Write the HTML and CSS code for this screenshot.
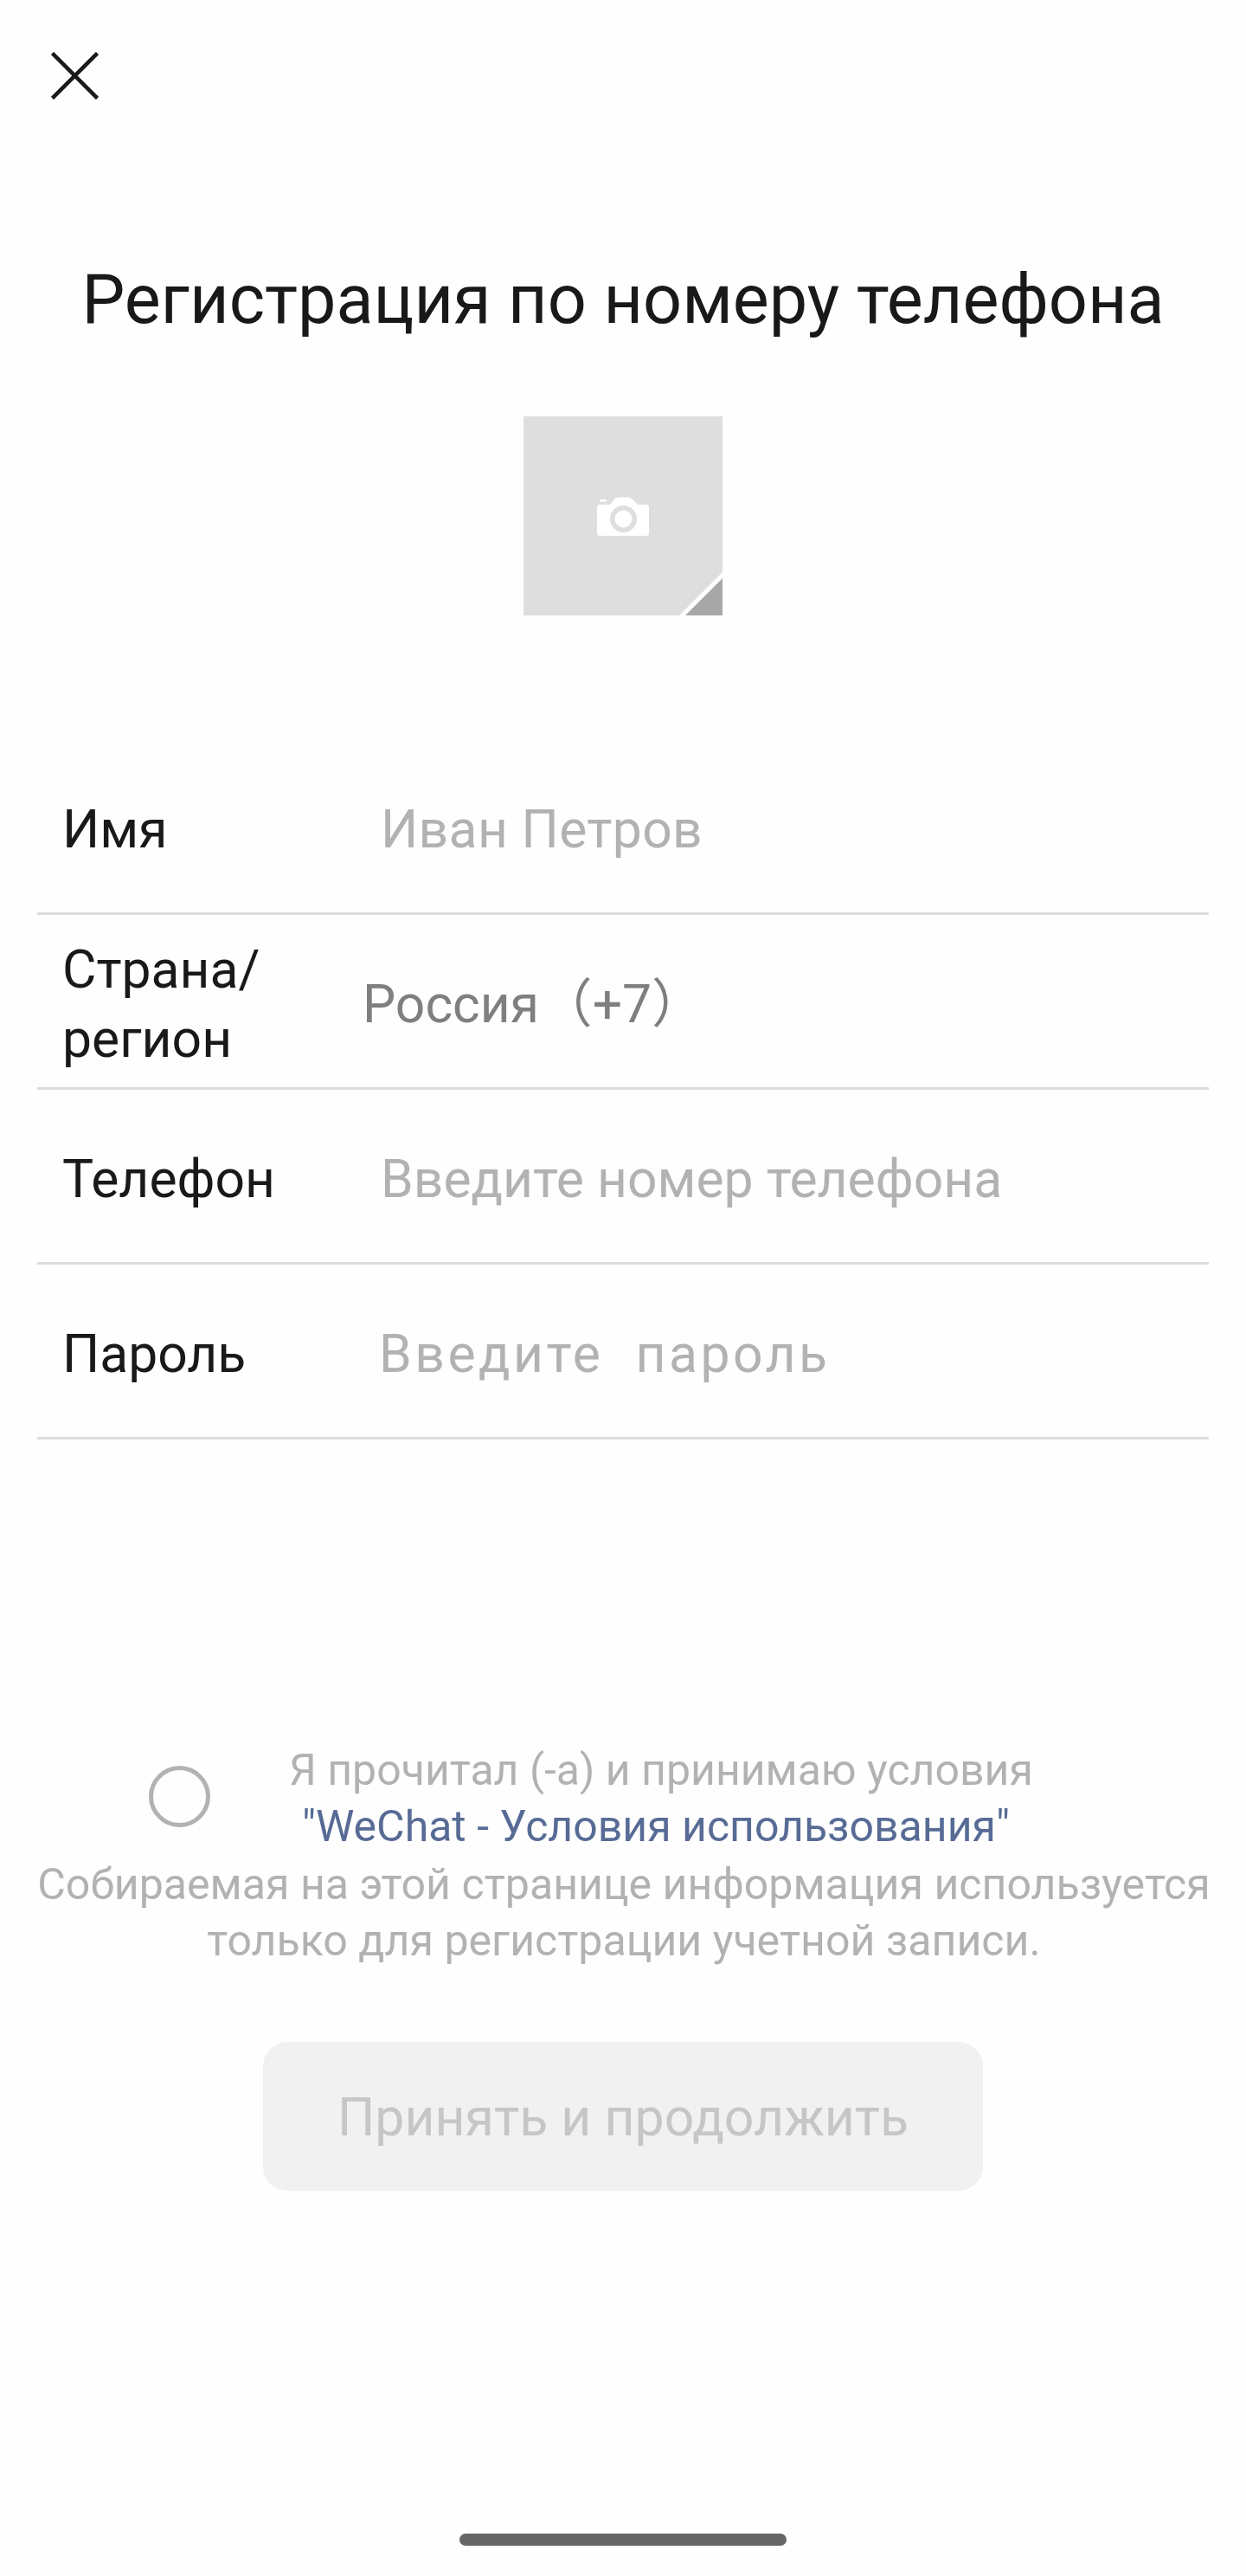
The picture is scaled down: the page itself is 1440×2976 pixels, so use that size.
FILE: index.html
```html
<!DOCTYPE html>
<html lang="ru">
<head>
<meta charset="utf-8">
<title>Регистрация по номеру телефона</title>
<link rel="stylesheet" href="styles.css">
</head>
<body>
<main class="screen">
  <header class="topbar">
    <svg class="close" viewBox="0 0 55 55" aria-hidden="true"><path d="M1.5 1.5 53.5 53.5M53.5 1.5 1.5 53.5"/></svg>
  </header>
  <h1 class="title">Регистрация по номеру телефона</h1>
  <div class="avatar">
    <svg class="camera" viewBox="0 0 60 45" aria-hidden="true">
      <path class="camera-body" fill-rule="evenodd" d="M3 9H15L20 3Q22 .5 25 .5H36Q39 .5 41 3L47 9H57Q60 9 60 12V42Q60 45 57 45H3Q0 45 0 42V12Q0 9 3 9ZM30.5 10A15.5 15.5 0 1 0 30.5 41A15.5 15.5 0 1 0 30.5 10ZM30.5 15.5A10 10 0 1 1 30.5 35.5A10 10 0 1 1 30.5 15.5Z"/>
      <rect class="camera-body" x="3" y="3" width="8" height="2.5"/>
    </svg>
    <svg class="corner" viewBox="0 0 50 50" aria-hidden="true">
      <path class="corner-stripe" d="M50 0V50H0Z"/>
      <path class="corner-fold" d="M50 7V50H7Z"/>
    </svg>
  </div>
  <section class="form">
    <div class="row"><span class="label">Имя</span><span class="value placeholder name">Иван Петров</span></div>
    <div class="row"><span class="label label-wrap">Страна/ регион</span><span class="value country">Россия<span class="code">（+7）</span></span></div>
    <div class="row"><span class="label">Телефон</span><span class="value placeholder">Введите номер телефона</span></div>
    <div class="row"><span class="label">Пароль</span><span class="value placeholder password">Введите&nbsp; пароль</span></div>
  </section>
  <section class="terms">
    <div class="agree">
      <span class="check"></span>
      <p class="agree-text">Я прочитал (-а) и принимаю условия<br><a class="link">"WeChat - Условия использования"</a></p>
    </div>
    <p class="note">Собираемая на этой странице информация используется<br>только для регистрации учетной записи.</p>
  </section>
  <button class="submit" type="button">Принять и продолжить</button>
  <div class="home-bar"></div>
</main>
</body>
</html>
```
FILE: styles.css
```css
* { box-sizing: border-box; }
html, body { margin: 0; padding: 0; background: #fefefe; }
body { font-family: Roboto, "Noto Sans CJK SC", "Noto Sans", sans-serif; color: #191919; }
.screen { width: 1440px; height: 2976px; display: flex; flex-direction: column; align-items: center; }
.topbar { width: 100%; height: 116px; padding: 60px 0 0 59px; }
.close { display: block; width: 55px; height: 55px; fill: none; stroke: #191919; stroke-width: 4.5; }
.title { margin: 180px 0 0; font-size: 79.1px; font-weight: 400; line-height: 100px; text-align: center; white-space: nowrap; height: 100px; }
.avatar { position: relative; width: 230px; height: 230px; margin-top: 85px; background: #dedede; display: flex; align-items: center; justify-content: center; }
.camera { width: 60px; height: 45px; display: block; }
.camera-body { fill: #fff; }
.corner { position: absolute; right: 0; bottom: 0; width: 50px; height: 50px; }
.corner-stripe { fill: #fff; }
.corner-fold { fill: #a8a8a8; }
.form { width: 1354px; margin-top: 144px; }
.row { height: 202px; border-bottom: 3px solid #dcdcdc; display: flex; align-items: center; font-size: 60.6px; padding: 9px 0 0 29px; }
.label { width: 368px; flex: none; line-height: 80px; }
.label-wrap { width: 250px; margin-right: 97px; }
.value { line-height: 80px; }
.placeholder { color: #b2b2b2; }
.name { letter-spacing: 0.35px; }
.country { color: #7f7f7f; }
.code { margin-left: 1px; }
.password { letter-spacing: 3.5px; margin-left: -2px; }
.terms { width: 100%; margin-top: 350px; display: flex; flex-direction: column; align-items: center; }
.agree { display: flex; align-items: center; width: 100%; padding-left: 172px; }
.check { width: 71px; height: 71px; border: 5px solid #b2b2b2; border-radius: 50%; flex: none; margin: 0 91px 5px 0; }
.agree-text { margin: 0; font-size: 50px; line-height: 65px; color: #b2b2b2; text-align: center; white-space: nowrap; }
.link { color: #576b95; margin-right: 12px; }
.note { margin: 2px 0 0 2px; font-size: 50.1px; line-height: 65px; color: #b2b2b2; text-align: center; white-space: nowrap; }
.submit { width: 832px; height: 172px; margin-top: 84px; padding: 3px 0 0; border: 0; border-radius: 28px; background: #f1f1f1; color: #c6c6c6; font: 400 60.8px Roboto, sans-serif; }
.home-bar { width: 378px; height: 14px; border-radius: 7px; background: #666; margin-top: 396px; }
```
